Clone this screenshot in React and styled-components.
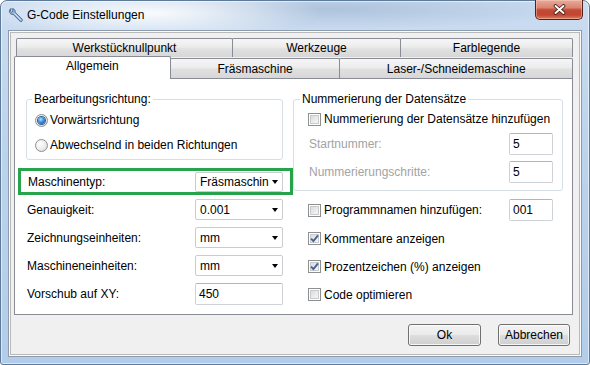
import React from "react";
import styled, { createGlobalStyle } from "styled-components";

const GlobalStyle = createGlobalStyle`
  body {
    margin: 0;
    background: #ffffff;
    font-family: "Segoe UI", "Liberation Sans", Arial, sans-serif;
    font-size: 12px;
    color: #000;
  }
`;

//Window frame
const Window = styled.div`
  width: 590px;
  height: 365px;
  box-sizing: border-box;
  border: 1px solid #5d7a99;
  border-radius: 7px 7px 3px 3px;
  padding: 0 7px 7px 7px;
  display: flex;
  flex-direction: column;
  background: radial-gradient(ellipse 170px 26px at 150px 12px, rgba(255, 255, 255, 0.9), rgba(255, 255, 255, 0)),
    radial-gradient(ellipse 260px 20px at 330px 8px, rgba(120, 150, 185, 0.35), rgba(120, 150, 185, 0)),
    linear-gradient(to bottom, #cbdcf0, #bcd3ec 40%, #b3cce9);
  box-shadow: inset 0 0 0 1px rgba(255, 255, 255, 0.55);
`;

const TitleBar = styled.div`
  height: 29px;
  display: flex;
  align-items: flex-start;
`;

const TitleIcon = styled.svg`
  width: 16px;
  height: 16px;
  margin-top: 6px;
  flex: none;
`;

const TitleText = styled.div`
  margin-left: 3px;
  margin-top: 7px;
  line-height: 15px;
  color: #000;
`;

const CloseButton = styled.div`
  margin-left: auto;
  margin-top: -1px;
  margin-right: -1px;
  width: 48px;
  height: 20px;
  box-sizing: border-box;
  border: 1px solid #55201a;
  border-top: none;
  border-radius: 0 0 5px 5px;
  background: linear-gradient(to bottom, #e9ab9d 0%, #d98572 40%, #c24a36 52%, #c2452f 78%, #dc7d5e 100%);
  box-shadow: inset 0 0 0 1px rgba(255, 210, 200, 0.45);
  display: flex;
  align-items: center;
  justify-content: center;
`;

const Client = styled.div`
  flex: 1;
  box-sizing: border-box;
  background: #f0f0f0;
  border: 1px solid #8e9bad;
  box-shadow: inset 0 0 0 1px #fcfcfc, inset 0 0 0 2px #b9b9b9;
  padding: 7px 8px 0 5px;
  display: flex;
  flex-direction: column;
`;

//Tabs
const TabStrip = styled.div`
  display: flex;
  flex-direction: column;
  height: 40px;
`;

const TabRow = styled.div`
  display: flex;
  align-items: flex-end;
  height: ${(p) => p.$h}px;
  padding-left: ${(p) => p.$indent}px;
  position: relative;
  z-index: ${(p) => p.$z};
`;

const Tab = styled.div`
  width: ${(p) => p.$w}px;
  height: ${(p) => (p.$active ? 23 : p.$h)}px;
  margin-bottom: ${(p) => (p.$active ? -1 : 0)}px;
  margin-left: -1px;
  &:first-child {
    margin-left: 0;
  }
  box-sizing: border-box;
  border: 1px solid #898c95;
  border-bottom: none;
  border-radius: 2px 2px 0 0;
  background: ${(p) =>
    p.$active
      ? "#ffffff"
      : "linear-gradient(to bottom, #f6f6f6 0%, #ececec 45%, #e0e0e0 55%, #d7d7d7 100%)"};
  position: relative;
  z-index: ${(p) => (p.$active ? 2 : 1)};
  display: flex;
  align-items: center;
  justify-content: center;
  padding-bottom: ${(p) => (p.$active ? 4 : 0)}px;
`;

const Panel = styled.div`
  height: 237px;
  box-sizing: border-box;
  background: #ffffff;
  border: 1px solid #898c95;
  padding: 13px 9px 0 11px;
  display: grid;
  grid-template-columns: 257px 270px;
  column-gap: 10px;
  align-items: start;
`;

const Column = styled.div`
  display: flex;
  flex-direction: column;
`;

//Group boxes
const GroupBox = styled.fieldset`
  margin: 0;
  min-width: 0;
  border: 1px solid #d5dfe5;
  border-radius: 3px;
  padding: ${(p) => p.$pad};
  display: flex;
  flex-direction: column;
  gap: ${(p) => p.$gap};
`;

const Legend = styled.legend`
  padding: 0 2px;
  margin-left: ${(p) => p.$offset}px;
  line-height: 15px;
`;

const OptionRow = styled.label`
  display: flex;
  align-items: center;
  height: ${(p) => p.$h || 20}px;
  gap: ${(p) => p.$gap || 3}px;
`;

const Radio = styled.span`
  width: 13px;
  height: 13px;
  box-sizing: border-box;
  border-radius: 50%;
  border: 1px solid #8e8f8f;
  background: radial-gradient(circle at 35% 35%, #ffffff 0%, #ececec 55%, #cfcfcf 100%);
  display: flex;
  align-items: center;
  justify-content: center;
  flex: none;
  &::after {
    content: "";
    display: ${(p) => (p.$checked ? "block" : "none")};
    width: 7px;
    height: 7px;
    border-radius: 50%;
    background: radial-gradient(circle at 40% 35%, #b8e2ff 0%, #3b8ede 45%, #134b8a 100%);
    box-shadow: 0 0 0 1px #2a5f95;
  }
`;

const CheckBox = styled.span`
  width: 13px;
  height: 13px;
  box-sizing: border-box;
  border: 1px solid #8e8f8f;
  background: linear-gradient(135deg, #d3d3d3 0%, #ececec 55%, #fbfbfb 100%);
  box-shadow: inset 0 0 0 1px #ffffff, inset 0 0 0 2px #c9cccf;
  display: flex;
  align-items: center;
  justify-content: center;
  flex: none;
`;

const FieldRow = styled.div`
  display: flex;
  align-items: center;
  justify-content: space-between;
  height: ${(p) => p.$h || 21}px;
  margin-top: ${(p) => p.$top || 0}px;
`;

const SubLabel = styled.span`
  color: ${(p) => (p.$disabled ? "#a3a3a3" : "#000")};
  padding-left: 1px;
`;

const Highlight = styled.div`
  margin: 8px -10px 0 -8px;
  height: 27px;
  box-sizing: border-box;
  border: 3px solid #27a34c;
  padding: 0 7px 0 7px;
  display: flex;
  align-items: center;
  justify-content: space-between;
`;

const Rows = styled.div`
  display: flex;
  flex-direction: column;
  gap: 7px;
  margin-top: ${(p) => p.$top}px;
  padding: ${(p) => p.$pad || "0"};
`;

const Combo = styled.div`
  width: 88px;
  height: ${(p) => p.$h || 21}px;
  box-sizing: border-box;
  border: 1px solid #c9cdd2;
  border-radius: 2px;
  background: #fff;
  padding-left: 4px;
  display: flex;
  align-items: center;
  justify-content: space-between;
  &::after {
    content: "";
    margin-right: 4px;
    border-left: 3.5px solid transparent;
    border-right: 3.5px solid transparent;
    border-top: 4px solid #000;
  }
`;

const TextBox = styled.div`
  width: ${(p) => p.$w}px;
  height: 22px;
  box-sizing: border-box;
  border: 1px solid #cfd3d8;
  border-top-color: #b2b5bb;
  border-radius: 2px;
  background: #fff;
  padding-left: 3px;
  display: flex;
  align-items: center;
`;

//Buttons
const ButtonRow = styled.div`
  display: flex;
  justify-content: flex-end;
  gap: 17px;
  margin-top: 9px;
  padding-right: 3px;
`;

const Button = styled.div`
  width: ${(p) => p.$w}px;
  height: 22px;
  box-sizing: border-box;
  border: 1px solid #707070;
  border-radius: 3px;
  background: linear-gradient(to bottom, #f2f2f2 0%, #ebebeb 48%, #dddddd 52%, #cfcfcf 100%);
  box-shadow: inset 0 0 0 1px rgba(255, 255, 255, 0.8);
  display: flex;
  align-items: center;
  justify-content: center;
`;

const Check = () => (
  <svg width="9" height="9" viewBox="0 0 9 9">
    <path d="M1 4.6 L3.4 7 L8 1.4" fill="none" stroke="#4b6191" strokeWidth="1.9" />
  </svg>
);

const topTabs = [
  { label: "Werkstücknullpunkt", w: 217 },
  { label: "Werkzeuge", w: 169 },
  { label: "Farblegende", w: 173 },
];

const frontTabs = [
  { label: "Allgemein", w: 157, active: true },
  { label: "Fräsmaschine", w: 171 },
  { label: "Laser-/Schneidemaschine", w: 234 },
];

const leftRows = [
  { label: "Genauigkeit:", value: "0.001", combo: true },
  { label: "Zeichnungseinheiten:", value: "mm", combo: true },
  { label: "Maschineneinheiten:", value: "mm", combo: true },
  { label: "Vorschub auf XY:", value: "450" },
];

const rightChecks = [
  { label: "Kommentare anzeigen", checked: true },
  { label: "Prozentzeichen (%) anzeigen", checked: true },
  { label: "Code optimieren", checked: false },
];

const App = () => {
  return (
    <>
      <GlobalStyle />
      <Window>
        <TitleBar>
          <TitleIcon viewBox="0 0 16 16">
            <path
              d="M3.2 1.4 C1.6 2.2 1 4 1.7 5.6 C2.3 6.9 3.7 7.6 5.1 7.3 L12 14.2 C12.6 14.8 13.5 14.8 14 14.2 C14.6 13.6 14.6 12.8 14 12.2 L7.1 5.3 C7.4 3.9 6.7 2.4 5.3 1.8 L4.6 1.6 L4.9 4.2 L3.6 5.2 L2.3 4 Z"
              fill="#9bb6d6"
              stroke="#3f5f86"
              strokeWidth="0.9"
              strokeLinejoin="round"
            />
            <path d="M6.4 6.4 L12.6 12.6" stroke="#e6eef8" strokeWidth="0.9" />
          </TitleIcon>
          <TitleText>G-Code Einstellungen</TitleText>
          <CloseButton>
            <svg width="13" height="11" viewBox="0 0 13 11">
              <path d="M2.5 2 L10.5 9 M10.5 2 L2.5 9" stroke="#3b1610" strokeWidth="3.6" strokeLinecap="round" />
              <path d="M2.5 2 L10.5 9 M10.5 2 L2.5 9" stroke="#ffffff" strokeWidth="2" strokeLinecap="round" />
            </svg>
          </CloseButton>
        </TitleBar>
        <Client>
          <TabStrip>
            <TabRow $h={19} $indent={2} $z={0}>
              {topTabs.map((t) => (
                <Tab key={t.label} $w={t.w} $h={19}>
                  {t.label}
                </Tab>
              ))}
            </TabRow>
            <TabRow $h={21} $indent={0} $z={1}>
              {frontTabs.map((t) => (
                <Tab key={t.label} $w={t.w} $h={20} $active={t.active}>
                  {t.label}
                </Tab>
              ))}
            </TabRow>
          </TabStrip>
          <Panel>
            <Column>
              <GroupBox $pad="3px 6px 4px 8px" $gap="5px">
                <Legend $offset={-3}>Bearbeitungsrichtung:</Legend>
                <OptionRow $gap={2}>
                  <Radio $checked />
                  Vorwärtsrichtung
                </OptionRow>
                <OptionRow $gap={2}>
                  <Radio />
                  Abwechselnd in beiden Richtungen
                </OptionRow>
              </GroupBox>
              <Highlight>
                <span>Maschinentyp:</span>
                <Combo $h={20}>Fräsmaschin</Combo>
              </Highlight>
              <Rows $top={4} $pad="0 0 0 1px">
                {leftRows.map((r) => (
                  <FieldRow key={r.label} $h={r.combo ? 21 : 22}>
                    <span>{r.label}</span>
                    {r.combo ? <Combo>{r.value}</Combo> : <TextBox $w={88}>{r.value}</TextBox>}
                  </FieldRow>
                ))}
              </Rows>
            </Column>
            <Column>
              <GroupBox $pad="2px 9px 7px 14px" $gap="4px">
                <Legend $offset={-8}>Nummerierung der Datensätze</Legend>
                <OptionRow>
                  <CheckBox />
                  Nummerierung der Datensätze hinzufügen
                </OptionRow>
                <FieldRow $h={22}>
                  <SubLabel $disabled>Startnummer:</SubLabel>
                  <TextBox $w={44}>5</TextBox>
                </FieldRow>
                <FieldRow $h={22} $top={2}>
                  <SubLabel $disabled>Nummerierungschritte:</SubLabel>
                  <TextBox $w={44}>5</TextBox>
                </FieldRow>
              </GroupBox>
              <Rows $top={8} $pad="0 10px 0 15px">
                <FieldRow $h={22}>
                  <OptionRow as="span">
                    <CheckBox />
                    Programmnamen hinzufügen:
                  </OptionRow>
                  <TextBox $w={44}>001</TextBox>
                </FieldRow>
                {rightChecks.map((c) => (
                  <OptionRow key={c.label} $h={21}>
                    <CheckBox>{c.checked && <Check />}</CheckBox>
                    {c.label}
                  </OptionRow>
                ))}
              </Rows>
            </Column>
          </Panel>
          <ButtonRow>
            <Button $w={73}>Ok</Button>
            <Button $w={72}>Abbrechen</Button>
          </ButtonRow>
        </Client>
      </Window>
    </>
  );
};

export default App;
